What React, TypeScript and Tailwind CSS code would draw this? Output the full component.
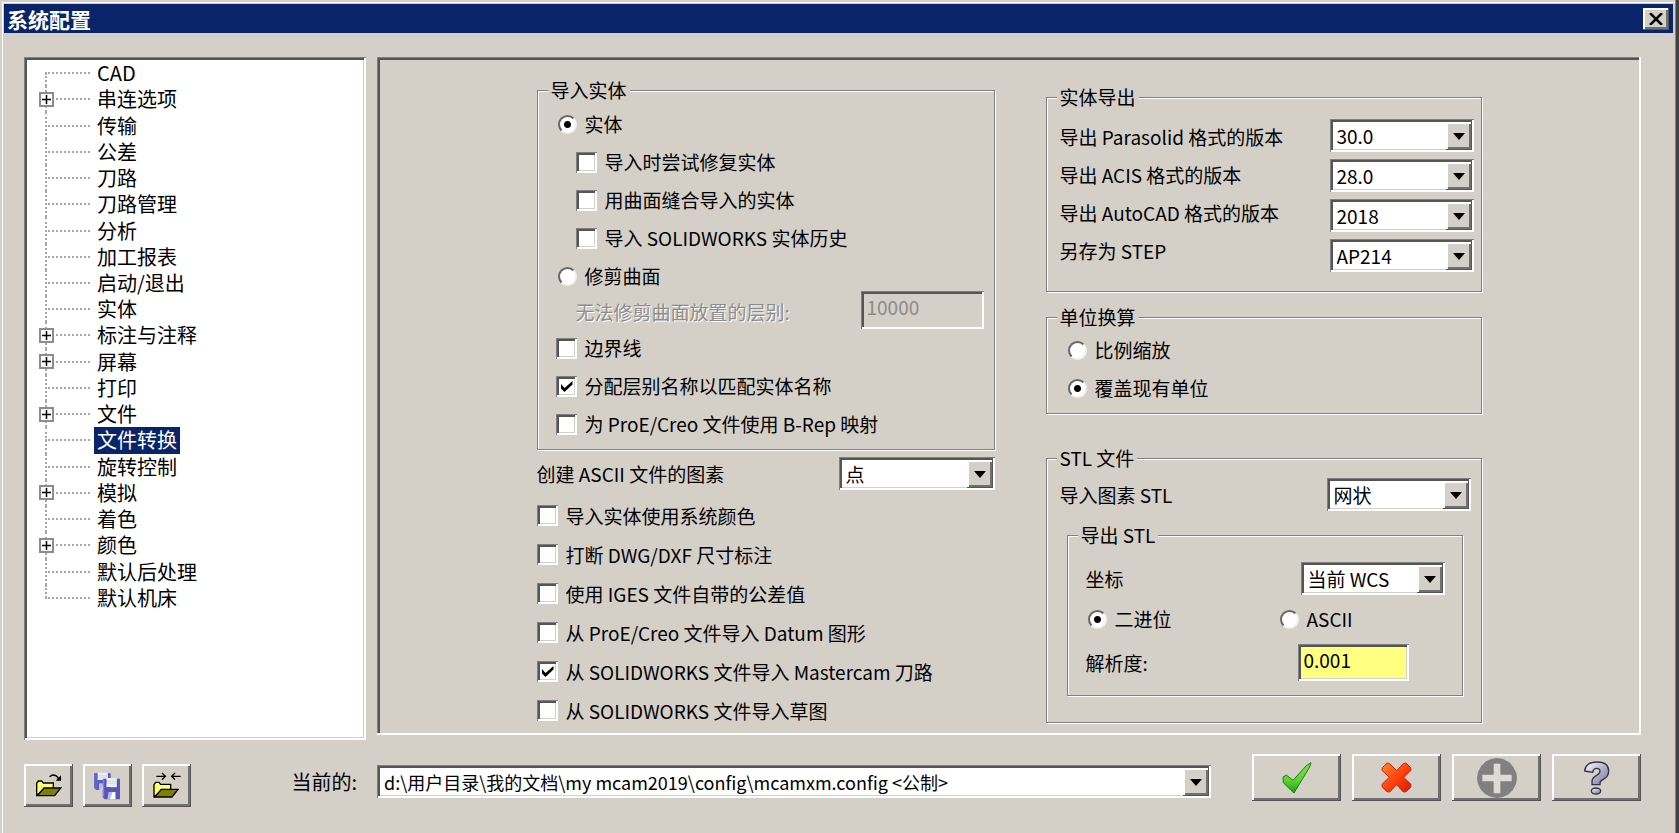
import { useId, useState } from "react"
import type { ReactNode } from "react"

// ── Data ──────────────────────────────────────────────────────────────────────

interface TreeEntry {
  label: string
  expandable?: boolean
}

const TREE: TreeEntry[] = [
  { label: "CAD" },
  { label: "串连选项", expandable: true },
  { label: "传输" },
  { label: "公差" },
  { label: "刀路" },
  { label: "刀路管理" },
  { label: "分析" },
  { label: "加工报表" },
  { label: "启动/退出" },
  { label: "实体" },
  { label: "标注与注释", expandable: true },
  { label: "屏幕", expandable: true },
  { label: "打印" },
  { label: "文件", expandable: true },
  { label: "文件转换" },
  { label: "旋转控制" },
  { label: "模拟", expandable: true },
  { label: "着色" },
  { label: "颜色", expandable: true },
  { label: "默认后处理" },
  { label: "默认机床" },
]

const IMPORT_OPTIONS = [
  { label: "导入实体使用系统颜色", checked: false },
  { label: "打断 DWG/DXF 尺寸标注", checked: false },
  { label: "使用 IGES 文件自带的公差值", checked: false },
  { label: "从 ProE/Creo 文件导入 Datum 图形", checked: false },
  { label: "从 SOLIDWORKS 文件导入 Mastercam 刀路", checked: true },
  { label: "从 SOLIDWORKS 文件导入草图", checked: false },
]

const EXPORT_VERSIONS = [
  { id: "parasolid", label: "导出 Parasolid 格式的版本", value: "30.0" },
  { id: "acis", label: "导出 ACIS 格式的版本", value: "28.0" },
  { id: "autocad", label: "导出 AutoCAD 格式的版本", value: "2018" },
  { id: "step", label: "另存为 STEP", value: "AP214" },
]

// ── Bevels ────────────────────────────────────────────────────────────────────

const SUNKEN =
  "shadow-[inset_1px_1px_#808080,inset_-2px_-2px_#fff,inset_3px_3px_#555,inset_-3px_-3px_#d4d0c8]"
const RAISED =
  "shadow-[inset_-1px_-1px_#555,inset_2px_2px_#fff,inset_-3px_-3px_#707070]"

// ── Controls ──────────────────────────────────────────────────────────────────

function Check({ label, checked = false }: { label: string; checked?: boolean }) {
  return (
    <label className="flex h-full items-center gap-2 whitespace-nowrap">
      <span className="relative flex">
        <input
          type="checkbox"
          defaultChecked={checked}
          className={`peer size-[21px] appearance-none bg-white ${SUNKEN}`}
        />
        <svg
          viewBox="0 0 21 21"
          className="pointer-events-none absolute inset-0 hidden size-[21px] peer-checked:block"
        >
          <path d="M5 8v4.500l3.500 3.500L16.500 8.500V5L8.500 12z" fill="#000" />
        </svg>
      </span>
      {label}
    </label>
  )
}

interface RadioProps {
  name: string
  label: string
  checked?: boolean
}

function Radio({ name, label, checked = false }: RadioProps) {
  return (
    <label className="flex h-full items-center gap-2 pl-0.5 whitespace-nowrap">
      <input
        type="radio"
        name={name}
        defaultChecked={checked}
        className="size-[19px] appearance-none rounded-full border-2 border-t-[#666] border-r-[#f4f2ee] border-b-[#f4f2ee] border-l-[#666] bg-white checked:bg-[radial-gradient(circle,#000_3px,#fff_4px)]"
      />
      {label}
    </label>
  )
}

interface ComboProps {
  id: string
  options: string[]
  className?: string
}

function Combo({ id, options, className = "w-36" }: ComboProps) {
  return (
    <span className={`relative flex h-[33px] ${className}`}>
      <select
        id={id}
        className={`h-full w-full appearance-none bg-white pr-8 pl-[7px] ${SUNKEN}`}
      >
        {options.map((o) => (
          <option key={o}>{o}</option>
        ))}
      </select>
      <span
        className={`pointer-events-none absolute top-[3px] right-[2px] bottom-[2px] flex w-[26px] items-center justify-center bg-[#d4d0c8] ${RAISED}`}
      >
        <svg width="12" height="7" viewBox="0 0 12 7">
          <path d="M0 0h12L6 7z" fill="#000" />
        </svg>
      </span>
    </span>
  )
}

interface GroupProps {
  title: string
  className?: string
  bodyClassName: string
  children: ReactNode
}

function Group({ title, className = "", bodyClassName, children }: GroupProps) {
  return (
    <fieldset
      className={`border border-[#808080] shadow-[1px_1px_#fff,inset_1px_1px_#fff] ${className}`}
    >
      <legend className="ml-2.5 bg-[#d4d0c8] px-[3px] leading-6">{title}</legend>
      <div className={bodyClassName}>{children}</div>
    </fieldset>
  )
}

interface PushButtonProps {
  title: string
  className: string
  disabled?: boolean
  children: ReactNode
}

function PushButton({ title, className, disabled, children }: PushButtonProps) {
  return (
    <button
      type="button"
      aria-label={title}
      disabled={disabled}
      className={`flex items-center justify-center bg-[#d4d0c8] ${RAISED} ${className}`}
    >
      {children}
    </button>
  )
}

// ── Icons ─────────────────────────────────────────────────────────────────────

function FolderShape() {
  return (
    <g stroke="#000" strokeWidth="4" strokeLinejoin="miter">
      <path d="M2 64V28l5-7h10l5 6h30v18H24L3 64z" fill="#ffff70" />
      <path d="M24 42h50L56 65H4z" fill="#808000" />
    </g>
  )
}

function IconOpen() {
  return (
    <svg width="26" height="23" viewBox="0 0 78 69">
      <FolderShape />
      <path d="M41 9q4-6 11-6 9 0 16 11" fill="none" stroke="#000" strokeWidth="4" />
      <path d="M75 4v16H59z" fill="#000" />
    </svg>
  )
}

function IconMerge() {
  return (
    <svg width="28" height="26" viewBox="0 0 84 78" className="-mt-0.5">
      <g transform="translate(1 10)">
        <FolderShape />
      </g>
      <g fill="none" stroke="#000" strokeWidth="4">
        <path d="M10 13h27M27 3l10 10-10 10" />
        <path d="M83 13H56M66 3L56 13l10 10" />
      </g>
    </svg>
  )
}

function FloppyShape() {
  return (
    <>
      <path d="M0 2h10v20h30V2h9v50H6l-6-6z" fill="#5a5ac0" />
      <path d="M3 4v40" stroke="#8e8ee0" strokeWidth="3" />
      <path d="M10 0h30v22H10z" fill="#eceef4" />
      <path d="M13 9h24M13 14h24" stroke="#c8ccd8" strokeWidth="2" />
      <path d="M14 32h24v20H14z" fill="#b9bbe6" />
      <path d="M26 32h12v20H22z" fill="#fff" />
    </>
  )
}

function IconSaveAll() {
  return (
    <svg width="27" height="28" viewBox="0 0 81 84">
      <g transform="translate(1 2)">
        <FloppyShape />
        <path d="M0 2h9v50H6l-6-6z" fill="#6464c8" />
      </g>
      <g transform="translate(26 18)">
        <path d="M0 2h12v26h30V2h10v62H6l-6-6z" fill="#5656bc" />
        <path d="M3 4v52" stroke="#8e8ee0" strokeWidth="3" />
        <path d="M12 0h30v27H12z" fill="#eceef4" />
        <path d="M15 10h24M15 16h24" stroke="#c8ccd8" strokeWidth="2" />
        <path d="M18 42h20v22H14z" fill="#b9bbe6" />
        <path d="M30 42h8v22H22z" fill="#fff" />
      </g>
    </svg>
  )
}

function IconOk() {
  return (
    <svg width="30" height="32" viewBox="0 0 90 96">
      <defs>
        <linearGradient id="ok-fill" x1="0" y1="0" x2="0" y2="1">
          <stop offset="0" stopColor="#7fe04a" />
          <stop offset="0.600" stopColor="#5bd42c" />
          <stop offset="1" stopColor="#1f9a10" />
        </linearGradient>
      </defs>
      <path
        d="M3 45l10-6 20 16L73 11l14-9-4 13L36 93 27 85 4 62z"
        fill="url(#ok-fill)"
        stroke="#1c7d10"
        strokeWidth="3"
        strokeLinejoin="round"
      />
    </svg>
  )
}

function IconCancel() {
  return (
    <svg width="31" height="31" viewBox="0 0 93 93">
      <defs>
        <linearGradient id="cancel-fill" x1="0" y1="0" x2="1" y2="1">
          <stop offset="0" stopColor="#ff8a2a" />
          <stop offset="0.500" stopColor="#ff4310" />
          <stop offset="1" stopColor="#d81800" />
        </linearGradient>
      </defs>
      <path
        d="M18 3l8 2 21 21L67 5l8-2 14 14 1 8-22 21 22 21-1 9-14 13-8 1-20-22-21 22-8-1L4 76l-1-9 22-21L3 25l1-8z"
        fill="url(#cancel-fill)"
        stroke="#d02208"
        strokeWidth="3"
        strokeLinejoin="round"
      />
    </svg>
  )
}

function IconAdd() {
  return (
    <svg width="40" height="40" viewBox="0 0 120 120">
      <path
        d="M60 0l18 3 19 10 12 14 9 18 2 15-3 18-10 19-14 13-18 8-15 2-18-3-19-10-13-14-8-18-2-15 3-18 10-19 14-13 18-8z"
        fill="#808080"
      />
      <path d="M50 17h20v33h34v20H70v36H50V70H16V50h34z" fill="#dedbd4" />
    </svg>
  )
}

function IconHelp() {
  return (
    <svg width="26" height="34" viewBox="0 0 78 102">
      <defs>
        <linearGradient id="help-fill" x1="0" y1="0" x2="1" y2="1">
          <stop offset="0" stopColor="#fff" />
          <stop offset="0.500" stopColor="#b4b4d2" />
          <stop offset="1" stopColor="#77779c" />
        </linearGradient>
      </defs>
      <g fill="url(#help-fill)" stroke="#33333f" strokeWidth="4" strokeLinejoin="round">
        <path d="M2 30Q4 3 40 3q34 0 34 27 0 17-16 25-10 5-10 11v5H24V62q0-12 14-19 10-5 10-12 0-9-10-9-10 0-12 12z" />
        <ellipse cx="36" cy="90" rx="14" ry="9" />
      </g>
    </svg>
  )
}

// ── Tree ──────────────────────────────────────────────────────────────────────

function Tree() {
  const [selected, setSelected] = useState("文件转换")

  return (
    <nav className={`w-[342px] shrink-0 bg-white pt-[3px] pl-[15px] ${SUNKEN}`}>
      <ul className="grid h-[551px] auto-rows-fr">
        {TREE.map((item, i) => (
          <li key={item.label} className="flex items-center">
            <span className="relative flex h-full w-[51px] items-center">
              <span
                className={`absolute left-[6px] border-l-2 border-dotted border-[#a8a8a8] ${
                  i === 0
                    ? "top-1/2 bottom-0"
                    : i === TREE.length - 1
                      ? "top-0 bottom-1/2"
                      : "inset-y-0"
                }`}
              />
              <span className="ml-[6px] w-full border-t-2 border-dotted border-[#a8a8a8]" />
              {item.expandable && (
                <button
                  type="button"
                  aria-label={`展开 ${item.label}`}
                  className="absolute left-0 flex size-[15px] items-center justify-center border-2 border-[#8c8c8c] bg-white"
                >
                  <svg width="9" height="9" viewBox="0 0 9 9">
                    <path d="M0 4.500h9M4.500 0v9" stroke="#000" strokeWidth="1.500" />
                  </svg>
                </button>
              )}
            </span>
            <button
              type="button"
              onClick={() => setSelected(item.label)}
              className={`ml-1 h-full px-[3px] leading-6 whitespace-nowrap ${
                selected === item.label ? "bg-[#0a246a] text-white" : ""
              }`}
            >
              {item.label}
            </button>
          </li>
        ))}
      </ul>
    </nav>
  )
}

// ── Left column of the page ───────────────────────────────────────────────────

function ImportColumn() {
  const levelId = useId()

  return (
    <div className="w-[458px]">
      <Group title="导入实体" bodyClassName="pt-[3px] pr-2.5 pb-1.5 pl-[18px]">
        <div className="h-[38px]">
          <Radio name="import" label="实体" checked />
        </div>
        <div className="h-[38px] pl-5">
          <Check label="导入时尝试修复实体" />
        </div>
        <div className="h-[38px] pl-5">
          <Check label="用曲面缝合导入的实体" />
        </div>
        <div className="h-[38px] pl-5">
          <Check label="导入 SOLIDWORKS 实体历史" />
        </div>
        <div className="h-[38px]">
          <Radio name="import" label="修剪曲面" />
        </div>
        <div className="flex h-[34px] items-center justify-between pl-5">
          <label htmlFor={levelId} className="text-[#8c8c8c] [text-shadow:1px_1px_#fff]">
            无法修剪曲面放置的层别:
          </label>
          <input
            id={levelId}
            disabled
            defaultValue="10000"
            className={`-mt-2 -mb-1 h-[38px] w-[123px] bg-[#d4d0c8] px-1.5 pb-2 text-[#8c8c8c] ${SUNKEN}`}
          />
        </div>
        <div className="h-[38px]">
          <Check label="边界线" />
        </div>
        <div className="h-[38px]">
          <Check label="分配层别名称以匹配实体名称" checked />
        </div>
        <div className="h-[38px]">
          <Check label="为 ProE/Creo 文件使用 B-Rep 映射" />
        </div>
      </Group>

      <div className="mt-[7px] mb-1.5 flex items-center justify-between">
        <label htmlFor="ascii-entity">创建 ASCII 文件的图素</label>
        <Combo id="ascii-entity" options={["点", "线", "样条曲线"]} className="w-[156px]" />
      </div>

      {IMPORT_OPTIONS.map((o) => (
        <div key={o.label} className="h-[39px]">
          <Check label={o.label} checked={o.checked} />
        </div>
      ))}
    </div>
  )
}

// ── Right column of the page ──────────────────────────────────────────────────

function ExportColumn() {
  return (
    <div className="w-[436px] pt-[7px]">
      <Group
        title="实体导出"
        bodyClassName="flex justify-between pt-[9px] pr-[7px] pb-[19px] pl-[13px]"
      >
        <div>
          {EXPORT_VERSIONS.map((v) => (
            <label key={v.id} htmlFor={v.id} className="block leading-[38px] whitespace-nowrap">
              {v.label}
            </label>
          ))}
        </div>
        <div className="flex flex-col gap-[7px] pt-px">
          {EXPORT_VERSIONS.map((v) => (
            <Combo key={v.id} id={v.id} options={[v.value]} />
          ))}
        </div>
      </Group>

      <Group title="单位换算" className="mt-[13px]" bodyClassName="pt-0.5 pb-1.5 pl-[19px]">
        <div className="h-[38px]">
          <Radio name="units" label="比例缩放" />
        </div>
        <div className="h-[38px]">
          <Radio name="units" label="覆盖现有单位" checked />
        </div>
      </Group>

      <Group title="STL 文件" className="mt-8" bodyClassName="pt-2 pb-[26px]">
        <div className="flex items-center justify-between pr-2.5 pl-[13px]">
          <label htmlFor="stl-import">导入图素 STL</label>
          <Combo id="stl-import" options={["网状", "线"]} />
        </div>
        <Group
          title="导出 STL"
          className="mt-3 mr-[18px] ml-5"
          bodyClassName="pt-[15px] pr-[17px] pb-3.5 pl-[18px]"
        >
          <div className="flex items-center justify-between">
            <label htmlFor="stl-coords">坐标</label>
            <Combo id="stl-coords" options={["当前 WCS", "世界坐标"]} />
          </div>
          <div className="flex h-12">
            <div className="w-48">
              <Radio name="stl-format" label="二进位" checked />
            </div>
            <Radio name="stl-format" label="ASCII" />
          </div>
          <div className="mt-px flex items-center justify-between pr-9">
            <label htmlFor="stl-resolution">解析度:</label>
            <input
              id="stl-resolution"
              defaultValue="0.001"
              className={`h-[37px] w-[111px] bg-[#ffff80] px-1.5 pb-1.5 ${SUNKEN}`}
            />
          </div>
        </Group>
      </Group>
    </div>
  )
}

// ── Dialog ────────────────────────────────────────────────────────────────────

export default function App() {
  return (
    <div className="flex min-h-screen flex-col bg-[#d4d0c8] p-1 pr-1.5 font-['Noto_Sans_CJK_SC',sans-serif] text-[20px] leading-6 text-black shadow-[inset_-3px_-3px_#404040,inset_-4px_-4px_#808080,inset_2px_2px_#d4d0c8,inset_3px_3px_#fff]">
      <header className="flex h-[29px] items-center justify-between bg-[#0a246a] pr-1 pl-[3px]">
        <h1 className="text-[21px] font-bold text-white">系统配置</h1>
        <PushButton title="关闭" className="h-[22px] w-[26px]">
          <svg width="14" height="12" viewBox="0 0 14 12">
            <path d="M1 0l12 12M13 0L1 12" stroke="#000" strokeWidth="2.500" />
          </svg>
        </PushButton>
      </header>

      <div className="flex flex-1 flex-col pt-6 pr-8 pb-[27px] pl-5">
        <div className="flex flex-1 gap-[11px]">
          <Tree />
          <main className="mb-[5px] flex flex-1 justify-center gap-[51px] pt-[21px] pb-[5px] text-[19px] shadow-[inset_-2px_-2px_#fff,inset_1px_1px_#808080,inset_3px_3px_#555]">
            <ImportColumn />
            <ExportColumn />
          </main>
        </div>

        <footer className="flex items-start pt-3.5">
          <div className="mt-2.5 flex w-[353px] shrink-0 items-center gap-2.5">
            <PushButton title="打开" className="h-[43px] w-[49px]">
              <IconOpen />
            </PushButton>
            <PushButton title="另存为" className="h-[43px] w-[49px]">
              <IconSaveAll />
            </PushButton>
            <PushButton title="合并" className="h-[43px] w-[49px]">
              <IconMerge />
            </PushButton>
            <label htmlFor="current" className="mb-2 ml-auto pr-5">
              当前的:
            </label>
          </div>
          <Combo
            id="current"
            options={["d:\\用户目录\\我的文档\\my mcam2019\\config\\mcamxm.config <公制>"]}
            className="mt-[11px] mr-[41px] flex-1 text-[18px]"
          />
          <div className="flex gap-[11px]">
            <PushButton title="确定" className="h-[47px] w-[89px]">
              <IconOk />
            </PushButton>
            <PushButton title="取消" className="h-[47px] w-[89px]">
              <IconCancel />
            </PushButton>
            <PushButton title="应用" className="h-[47px] w-[89px]" disabled>
              <IconAdd />
            </PushButton>
            <PushButton title="帮助" className="h-[47px] w-[89px]">
              <IconHelp />
            </PushButton>
          </div>
        </footer>
      </div>
    </div>
  )
}
